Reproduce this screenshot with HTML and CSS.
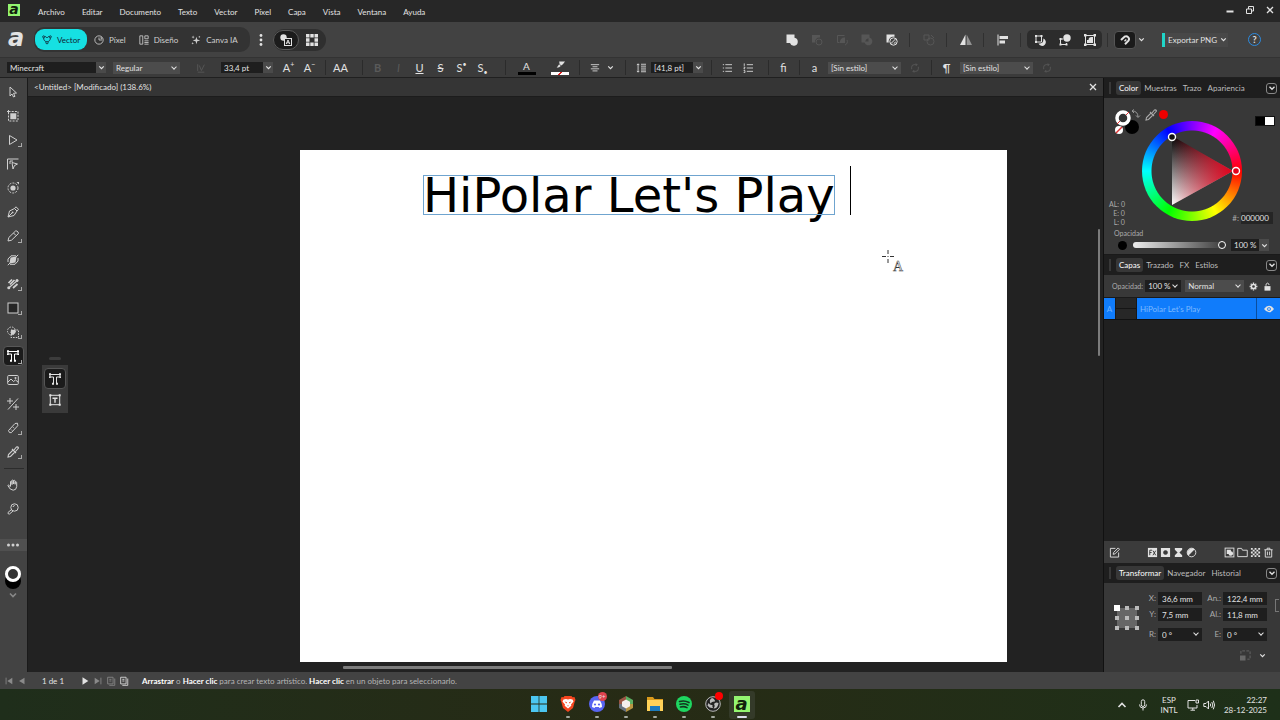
FILE: index.html
```html
<!DOCTYPE html>
<html lang="es">
<head>
  <meta charset="UTF-8" />
  <meta name="viewport" content="width=device-width, initial-scale=1.0" />
  <title>Untitled</title>
  <link rel="stylesheet" href="styles.css">
</head>
<body>

  <!-- Iconos, todos en una rejilla de 12 -->
  <svg class="sprite" aria-hidden="true">
    <symbol id="i-vector" viewBox="0 0 12 12"><path d="M2 3.500c0 3 1.500 4 3 4.500M10 3.500c0 3-1.500 4-3 4.500M3.500 2h1l1.500 1.500L7.500 2h1"/><circle cx="2" cy="2.200" r="1.200"/><circle cx="10" cy="2.200" r="1.200"/><circle cx="6" cy="9.200" r="1.400"/></symbol>
    <symbol id="i-pixel" viewBox="0 0 12 12"><circle cx="6" cy="6" r="5"/><path d="M6 3v3h3.500M8.500 2v2.500H10"/></symbol>
    <symbol id="i-layout" viewBox="0 0 12 12"><path d="M1 1h3.500v10H1zM7 1h4v3.500H7zM6.500 7h5M6.500 9h5M6.500 11h5"/></symbol>
    <symbol id="i-spark" viewBox="0 0 12 12"><path class="f" d="M6.500 2l1 3.500 3.500 1-3.500 1-1 3.500-1-3.500-3.500-1 3.500-1zM2.500.5l.5 1.500 1.500.5-1.500.5-.5 1.500-.5-1.500L.5 2.500 2 2zM2 8.500l.4 1.100 1.100.4-1.100.4L2 11.500l-.4-1.100L.5 10l1.100-.4zM10 1l.4.900.9.400-.9.400L10 3.500l-.4-.8-.9-.4.900-.4z"/></symbol>
    <symbol id="i-dots-v" viewBox="0 0 12 12"><circle class="f" cx="6" cy="1.500" r="1.400"/><circle class="f" cx="6" cy="6" r="1.400"/><circle class="f" cx="6" cy="10.500" r="1.400"/></symbol>
    <symbol id="i-dots-h" viewBox="0 0 12 12"><circle class="f" cx="1.500" cy="6" r="1.500"/><circle class="f" cx="6" cy="6" r="1.500"/><circle class="f" cx="10.500" cy="6" r="1.500"/></symbol>
    <symbol id="i-charshape" viewBox="0 0 12 12"><circle class="f" cx="3.500" cy="3.500" r="3.200"/><rect x="4.500" y="4.500" width="7" height="7" fill="#1c1c1c"/><path d="M6.200 10l1.800-4 1.800 4M6.800 8.800h2.400"/></symbol>
    <symbol id="i-grid" viewBox="0 0 12 12"><path class="f" d="M0 0h3.500v3.500H0zM4.300 0h3.400v3.500H4.300zM8.500 0H12v3.500H8.500zM0 4.300h3.500v3.400H0zM8.500 4.300H12v3.400H8.500zM0 8.500h3.500V12H0zM4.300 8.500h3.400V12H4.300zM8.500 8.500H12V12H8.500z"/></symbol>
    <symbol id="i-union" viewBox="0 0 12 12"><path class="f" d="M.5.5h8v3.300A4 4 0 1 1 4 9H.500z"/></symbol>
    <symbol id="i-subtract" viewBox="0 0 12 12"><path class="f" d="M1 1h8v2.500A4.500 4.500 0 0 0 4 8.500H1z"/><circle cx="8" cy="8" r="3"/></symbol>
    <symbol id="i-intersect" viewBox="0 0 12 12"><path d="M8.500 1.500h-7v7h2"/><path class="f" d="M9 3.500V9H4A4.500 4.500 0 0 1 9 3.500z"/><path d="M9 11a3.500 3.500 0 0 0 2-5"/></symbol>
    <symbol id="i-xor" viewBox="0 0 12 12"><path class="f" fill-rule="evenodd" d="M.5.500h8v3A4 4 0 1 1 3.500 8.500h-3zM4.200 7.500h3.300V4.200A4 4 0 0 0 4.200 7.500z"/></symbol>
    <symbol id="i-combine" viewBox="0 0 12 12"><path class="f" d="M.5.500h8v2.300A4.700 4.700 0 0 0 2.800 8.500H.500z"/><circle cx="7.500" cy="7.500" r="3.700"/><path class="f" d="M9.500 4.500v5h-5a4 4 0 0 0 5-5z"/><path d="M5 9.500L9.500 5"/></symbol>
    <symbol id="i-divide" viewBox="0 0 12 12"><path d="M1 1h5v5H1z"/><circle cx="7.500" cy="7.500" r="3.500"/><path d="M8 1l3 3"/></symbol>
    <symbol id="i-flip" viewBox="0 0 12 12"><path class="f" d="M5.500.5V11H0z"/><path class="f" opacity=".5" d="M6.700.5V11H12z"/></symbol>
    <symbol id="i-alignleft" viewBox="0 0 12 12"><path d="M1 .5v11"/><path class="f" d="M2.500 2H11v3H2.500zM2.500 6.500H8v3H2.500z"/></symbol>
    <symbol id="i-op1" viewBox="0 0 12 12"><path d="M2 2h5.500v6H2z"/><path class="f" d="M1 1h2v2H1zM6.500 1h2v2h-2zM1 7h2v2H1z"/><path class="f" d="M9.300 4.500a3.800 3.800 0 1 1-4.800 5H6q3.300-.5 3.300-3.500z"/></symbol>
    <symbol id="i-op2" viewBox="0 0 12 12"><circle class="f" cx="8" cy="4" r="3.700"/><path d="M4 5H1.500v5.500h6V9"/><path class="f" d="M.5 4h2v2h-2zM.5 9.500h2v2h-2zM6.500 9.500h2v2h-2z"/></symbol>
    <symbol id="i-op3" viewBox="0 0 12 12"><path d="M1.500 1.500h9v9h-9z"/><path class="f" d="M0 0h2.500v2.500H0zM9.500 0H12v2.500H9.500zM0 9.500h2.500V12H0zM9.500 9.500H12V12H9.500zM3 9V6h1.500a3 3 0 0 1 3-3H9v6z"/></symbol>
    <symbol id="i-magnet" viewBox="0 0 12 12"><path stroke-width="2" d="M2 6l3.500-3.300a2.900 2.900 0 0 1 4 4L6 10.200"/><path d="M5.500 7.300l1.800-1.800" stroke-width="1.500"/></symbol>
    <symbol id="i-chev" viewBox="0 0 12 12"><path d="M3 4.500l3 3 3-3" stroke-width="1.600"/></symbol>
    <symbol id="i-up" viewBox="0 0 12 12"><path d="M2.500 8L6 4.500 9.500 8" stroke-width="1.600"/></symbol>
    <symbol id="i-min" viewBox="0 0 12 12"><path d="M2.500 7.500h7" stroke-width="2"/></symbol>
    <symbol id="i-restore" viewBox="0 0 12 12"><path d="M2.500 5h5v4.500h-5zM4.500 5V2.500h5V7H7.500"/></symbol>
    <symbol id="i-close" viewBox="0 0 12 12"><path d="M3 3l6 6M9 3L3 9" stroke-width="1.300"/></symbol>
    <symbol id="i-center" viewBox="0 0 12 12"><path d="M1 2h10M3 4.500h6M1 7h10M3 9.500h6"/></symbol>
    <symbol id="i-leading" viewBox="0 0 12 12"><path d="M2.500 1v10M1 2.500L2.500 1 4 2.500M1 9.500L2.500 11 4 9.500M6 1.500h6M6 3.800h6M6 6.100h6M6 8.400h6M6 10.500h6"/></symbol>
    <symbol id="i-bullets" viewBox="0 0 12 12"><path d="M4 2h8M4 6h8M4 10h8M1 2h1.500M1 6h1.500M1 10h1.500"/></symbol>
    <symbol id="i-numbers" viewBox="0 0 12 12"><path d="M4.500 2H12M4.500 6H12M4.500 10H12M1.500.5v3M.8 5H2.500L1 7h1.500M.8 9h1.500v2.500H.8"/></symbol>
    <symbol id="i-refresh" viewBox="0 0 12 12"><path d="M2 7.500V5a3 3 0 0 1 3-3h3.500M7 .5L8.500 2 7 3.500M10 4.500V7a3 3 0 0 1-3 3H3.500M5 8.500L3.500 10 5 11.500"/></symbol>
    <symbol id="i-kern" viewBox="0 0 12 12"><path d="M2 1.500v8M4 3l2.500 6L10 2M2 11h8"/></symbol>
    <symbol id="i-marker" viewBox="0 0 12 12"><path class="f" d="M5 .5h7L9.500 4 7.500 5.500 5.500 3.500zM5 4l2 2-2 1.500L2 8z"/></symbol>

    <symbol id="i-move" viewBox="0 0 12 12"><path d="M3 1l6.500 6-3 .3 1.500 3-1.500.7L5 8 3 10z"/></symbol>
    <symbol id="i-artboard" viewBox="0 0 12 12"><path d="M1.500 1.500h9.500v9.500H1.500z" stroke-dasharray="2 1.200"/><path class="f" d="M3.300 3.300h6v6h-6zM0 1h3v1H0zM1 0h1v3H1z"/></symbol>
    <symbol id="i-node" viewBox="0 0 12 12"><path d="M2.500 1.500L10 6 2.500 10.500z"/></symbol>
    <symbol id="i-corner" viewBox="0 0 12 12"><path d="M.5 11.500V1h11M3 3h3M3 3v3"/><path d="M5 4.500l5.500 1.500-3 1.500L6 11z"/></symbol>
    <symbol id="i-contour" viewBox="0 0 12 12"><circle cx="6" cy="6" r="5" stroke-dasharray="2 1.200"/><circle class="f" cx="6" cy="6" r="2.600"/><path class="f" d="M9.500 0H12v2.500z"/></symbol>
    <symbol id="i-pen" viewBox="0 0 12 12"><path d="M1 11L2.500 5 7.500 2.500 10 5 7 9.500zM7.500 2.500L9 .8 11.500 3.300 10 5M1 11l4-4"/><circle class="f" cx="5.600" cy="6.400" r=".9"/></symbol>
    <symbol id="i-pencil" viewBox="0 0 12 12"><path d="M1 11l.8-3.500L8.500 1q1.500-.5 2.500 1t0 2L4.500 10.200zM6.500 3l2.500 2.500"/></symbol>
    <symbol id="i-fillb" viewBox="0 0 12 12"><path class="f" d="M3.500 3.500L9.500 2.500 8.500 8.500 2.500 9.500z"/><path d="M.8 11.200L11.200.8M1 8V5l3-3.200h5M3 10.300h5L11 7V4"/></symbol>
    <symbol id="i-gradient" viewBox="0 0 12 12"><path d="M1 10.500L11 2" stroke-width="1.200"/><path d="M1.500 5l3.500-3.500M3 6.500l4.500-4.500M6 10l4.500-4" stroke-width="1.700"/><circle class="f" cx="1.800" cy="9.800" r="1.500"/><circle class="f" cx="10" cy="2.500" r="1.500"/></symbol>
    <symbol id="i-rect" viewBox="0 0 12 12"><rect x="1" y="1" width="10" height="10" fill="#262626"/></symbol>
    <symbol id="i-builder" viewBox="0 0 12 12"><circle cx="4.500" cy="5" r="4" stroke-dasharray="1.500 1.200"/><path d="M4 4h7.500v7.500H4z" stroke-dasharray="1.500 1.200"/><path class="f" d="M4 4h4.500v2A4.500 4.500 0 0 1 4 9z"/></symbol>
    <symbol id="i-type" viewBox="0 0 12 12"><path d="M1.500 1.500h9M1.500 4L4.500 4V10.500M10.500 4L7.500 4V10.500M1 1.500v2.500M11 1.500v2.500"/><path class="f" d="M0 .3h2v2H0zM10 .3h2v2h-2zM3 9.700h2v2H3zM7 9.700h2v2H7zM0 3.500h1.800v1.600H0zM10.200 3.500H12v1.600h-1.800z"/></symbol>
    <symbol id="i-frame" viewBox="0 0 12 12"><path d="M1.300 1.300h9.400v9.400H1.300z"/><path d="M3.500 4.200h5M6 4.200v4.600" stroke-width="1.400"/><path class="f" d="M.3.300h2v2h-2zM9.700.300h2v2h-2zM.3 9.700h2v2h-2zM9.700 9.700h2v2h-2z"/></symbol>
    <symbol id="i-image" viewBox="0 0 12 12"><rect x=".7" y="1.500" width="10.600" height="9" rx="1"/><path d="M1 8l3-3 2.500 2.500L8.500 6 11 8"/><circle class="f" cx="8.500" cy="4" r="1"/></symbol>
    <symbol id="i-crop" viewBox="0 0 12 12"><path d="M0 3h6M3 0v6M11 .5L1 11.500M6 9h6M9 6v6"/></symbol>
    <symbol id="i-knife" viewBox="0 0 12 12"><path d="M1.500 8.500l6.500-7 2.500-.3.300 2.500-6.500 7Q2 11.500 1.500 8.500zM4 7.500l1 1M6 5.200l1 1"/></symbol>
    <symbol id="i-dropper" viewBox="0 0 12 12"><path d="M1 11l.5-2.500L6 4l2 2-4.500 4.500zM5 3l4 4M7 4l2.500-3q1.500-.5 2 1L8.500 5.500" stroke-width="1.100"/></symbol>
    <symbol id="i-hand" viewBox="0 0 12 12"><path d="M3.500 7V2.500q.8-1 1.500 0V6M5 5V1.500q.8-1 1.500 0V5M6.500 5V1.800q.8-1 1.600 0V5.500M8.100 5V3q1-.8 1.600.3V7.500q-.3 3.700-3.500 3.700Q3 11.200.8 6.500q.7-1 1.700.2l1 1.300"/></symbol>
    <symbol id="i-zoom" viewBox="0 0 12 12"><circle cx="7.500" cy="4.500" r="3.700"/><path d="M4.500 6.500L1 9.500q-.5 1.700 1.500 1.500L6 8M6 4q.3-1.400 1.700-1.500"/></symbol>

    <symbol id="i-edit" viewBox="0 0 12 12"><path d="M7 1.500H1.500v9.500h9V6M4.500 8l.5-2L10 1l1.500 1.500-5 5z"/></symbol>
    <symbol id="i-fx" viewBox="0 0 12 12"><rect class="f" x="1" y="1" width="10" height="10"/><path stroke="#333" d="M3 9V3.500h2.500M3 6h2M6.500 4l3 5M9.500 4l-3 5"/></symbol>
    <symbol id="i-mask" viewBox="0 0 12 12"><path class="f" fill-rule="evenodd" d="M1 1h10v10H1zM6 3.500a2.500 2.500 0 1 0 .01 0z"/></symbol>
    <symbol id="i-hourglass" viewBox="0 0 12 12"><path class="f" d="M2 1h8v2L7 6l3 3v2H2V9l3-3-3-3z"/></symbol>
    <symbol id="i-adjust" viewBox="0 0 12 12"><circle cx="6" cy="6" r="4.700"/><path class="f" d="M9.500 2.500a5 5 0 0 0-7 7z"/></symbol>
    <symbol id="i-layeradd" viewBox="0 0 12 12"><rect x="1.200" y="1.200" width="9.600" height="9.600"/><path class="f" d="M3 3h4.500v1.500A2.500 2.500 0 1 1 5 7.500H3z"/></symbol>
    <symbol id="i-folder" viewBox="0 0 12 12"><path d="M.8 10.500v-9H5L6 3.500h5.200v7z"/></symbol>
    <symbol id="i-checker" viewBox="0 0 12 12"><path class="f" d="M1 1h2v2H1zM5 1h2v2H5zM9 1h2v2H9zM3 3h2v2H3zM7 3h2v2H7zM1 5h2v2H1zM5 5h2v2H5zM9 5h2v2H9zM3 7h2v2H3zM7 7h2v2H7zM1 9h2v2H1zM5 9h2v2H5zM9 9h2v2H9z"/></symbol>
    <symbol id="i-trash" viewBox="0 0 12 12"><path d="M1.500 3h9M4.500 3V1.300h3V3M2.500 3v8h7V3M4.800 5v4M7.200 5v4"/></symbol>
    <symbol id="i-gear" viewBox="0 0 12 12"><circle cx="6" cy="6" r="2.800" stroke-width="2"/><path stroke-width="1.800" d="M6 .8v1.700M6 9.500v1.700M.8 6h1.700M9.500 6h1.700M2.300 2.300l1.200 1.200M8.500 8.500l1.200 1.200M2.300 9.700l1.200-1.200M8.500 3.500l1.200-1.200"/></symbol>
    <symbol id="i-lock" viewBox="0 0 12 12"><rect class="f" x="2" y="5.500" width="8" height="6"/><path d="M4 5V3q2-3 4 0v1" stroke-width="1.300"/></symbol>
    <symbol id="i-eye" viewBox="0 0 12 12"><path class="f" fill-rule="evenodd" d="M0 6q6-8 12 0-6 8-12 0zM6 3.800a2.200 2.200 0 1 0 .01 0z"/><circle class="f" cx="6" cy="6" r="1.100"/></symbol>
    <symbol id="i-anchor" viewBox="0 0 12 12"><path d="M1 4V1h10v9H8" stroke-dasharray="3 1.500"/><rect class="f" x="0" y="6" width="6" height="5.500"/></symbol>

    <symbol id="i-first" viewBox="0 0 12 12"><path d="M2.500 2v8"/><path class="f" d="M10 2v8L4 6z"/></symbol>
    <symbol id="i-prev" viewBox="0 0 12 12"><path class="f" d="M9 2v8L2.500 6z"/></symbol>
    <symbol id="i-next" viewBox="0 0 12 12"><path class="f" d="M3 1.500v9L10 6z"/></symbol>
    <symbol id="i-last" viewBox="0 0 12 12"><path d="M9.500 2v8"/><path class="f" d="M2 2v8l6-4z"/></symbol>
    <symbol id="i-page" viewBox="0 0 12 12"><path d="M2 1.500h6.500v8H2zM4 11.200h6.500V3M4 4h2.500M4 6h2.500"/></symbol>
    <symbol id="i-mic" viewBox="0 0 12 12"><rect x="4.300" y=".8" width="3.400" height="6.700" rx="1.700"/><path d="M2.500 5.500a3.500 3.500 0 0 0 7 0M6 9v2.500"/></symbol>
    <symbol id="i-net" viewBox="0 0 12 12"><path d="M8 1.500H1v7.500h9V6M3.500 11.200h4.500M5.800 9v2M9 1h2.500v3H9z"/></symbol>
    <symbol id="i-sound" viewBox="0 0 12 12"><path d="M.8 4.500H3L5.500 2v8L3 7.500H.8zM7.200 4.500q1 1.500 0 3M8.800 3q2 3 0 6M10.300 1.700q2.600 4.300 0 8.600"/></symbol>
  </svg>

  <div class="app">

    <header class="titlebar">
      <span class="brand">a</span>
      <nav class="menu">
        <a href="#">Archivo</a>
        <a href="#">Editar</a>
        <a href="#">Documento</a>
        <a href="#">Texto</a>
        <a href="#">Vector</a>
        <a href="#">Píxel</a>
        <a href="#">Capa</a>
        <a href="#">Vista</a>
        <a href="#">Ventana</a>
        <a href="#">Ayuda</a>
      </nav>
      <div class="window-buttons">
        <button aria-label="Minimizar"><svg><use href="#i-min"/></svg></button>
        <button aria-label="Restaurar"><svg><use href="#i-restore"/></svg></button>
        <button aria-label="Cerrar"><svg><use href="#i-close"/></svg></button>
      </div>
    </header>

    <div class="toolbar">
      <span class="logo">a</span>
      <div class="studios">
        <button class="studio active"><svg><use href="#i-vector"/></svg>Vector</button>
        <button class="studio"><svg><use href="#i-pixel"/></svg>Píxel</button>
        <button class="studio"><svg><use href="#i-layout"/></svg>Diseño</button>
        <button class="studio"><svg><use href="#i-spark"/></svg>Canva IA</button>
      </div>
      <button class="more" aria-label="Más"><svg><use href="#i-dots-v"/></svg></button>
      <div class="views">
        <button class="view active" aria-label="Vista de objetos"><svg><use href="#i-charshape"/></svg></button>
        <button class="view" aria-label="Vista de cuadrícula"><svg><use href="#i-grid"/></svg></button>
      </div>

      <div class="toolbar-right">
        <button class="tb" aria-label="Sumar"><svg><use href="#i-union"/></svg></button>
        <button class="tb" disabled aria-label="Restar"><svg><use href="#i-subtract"/></svg></button>
        <button class="tb" disabled aria-label="Intersecar"><svg><use href="#i-intersect"/></svg></button>
        <button class="tb" disabled aria-label="Excluir"><svg><use href="#i-xor"/></svg></button>
        <button class="tb" aria-label="Combinar"><svg><use href="#i-combine"/></svg></button>
        <i class="sep"></i>
        <button class="tb" disabled aria-label="Dividir"><svg><use href="#i-divide"/></svg></button>
        <i class="sep"></i>
        <button class="tb" aria-label="Voltear"><svg><use href="#i-flip"/></svg></button>
        <i class="sep"></i>
        <button class="tb" aria-label="Alinear"><svg><use href="#i-alignleft"/></svg></button>
        <i class="sep"></i>
        <div class="tb-group">
          <button class="tb" aria-label="Insertar detrás"><svg><use href="#i-op1"/></svg></button>
          <button class="tb" aria-label="Insertar encima"><svg><use href="#i-op2"/></svg></button>
          <button class="tb" aria-label="Insertar dentro"><svg><use href="#i-op3"/></svg></button>
        </div>
        <i class="sep"></i>
        <button class="magnet" aria-label="Ajuste"><svg><use href="#i-magnet"/></svg></button>
        <button class="arrow" aria-label="Opciones de ajuste"><svg><use href="#i-chev"/></svg></button>
        <button class="export">Exportar PNG<svg><use href="#i-chev"/></svg></button>
        <button class="help" aria-label="Ayuda">?</button>
      </div>
    </div>

    <div class="context">
      <div class="combo font-name">
        <input type="text" value="Minecraft" aria-label="Fuente">
        <button aria-label="Lista de fuentes"><svg><use href="#i-chev"/></svg></button>
      </div>
      <div class="select font-style">
        <select aria-label="Estilo de fuente"><option>Regular</option></select>
      </div>
      <button class="ctx kern" disabled aria-label="Fuente variable"><svg><use href="#i-kern"/></svg></button>
      <div class="combo size">
        <input type="text" value="33,4 pt" aria-label="Tamaño">
        <button aria-label="Tamaños"><svg><use href="#i-chev"/></svg></button>
      </div>
      <div class="group g-size">
        <button class="ctx letter">A<sup>+</sup></button>
        <button class="ctx letter">A<sup>−</sup></button>
      </div>
      <div class="group g-caps"><button class="ctx letter">AA</button></div>
      <div class="group g-letters">
        <button class="ctx letter" disabled><b>B</b></button>
        <button class="ctx letter" disabled><i>I</i></button>
        <button class="ctx letter"><u>U</u></button>
        <button class="ctx letter"><s>S</s></button>
        <button class="ctx letter">S<sup>•</sup></button>
        <button class="ctx letter">S<sub>•</sub></button>
      </div>
      <div class="group g-color">
        <button class="ctx swatch"><span>A</span><i class="bar black"></i></button>
        <button class="ctx swatch" aria-label="Resaltado"><svg><use href="#i-marker"/></svg><i class="bar none"></i></button>
      </div>
      <div class="group g-align">
        <button class="ctx" aria-label="Alinear al centro"><svg><use href="#i-center"/></svg></button>
        <button class="arrow" aria-label="Más alineaciones"><svg><use href="#i-chev"/></svg></button>
      </div>
      <div class="group g-leading">
        <span class="ctx"><svg><use href="#i-leading"/></svg></span>
        <div class="combo size">
          <input type="text" value="[41,8 pt]" aria-label="Interlineado">
          <button aria-label="Interlineados"><svg><use href="#i-chev"/></svg></button>
        </div>
      </div>
      <div class="group g-lists">
        <button class="ctx" aria-label="Viñetas"><svg><use href="#i-bullets"/></svg></button>
        <button class="ctx" aria-label="Numeración"><svg><use href="#i-numbers"/></svg></button>
      </div>
      <div class="group g-lig"><button class="ctx letter">fi</button></div>
      <div class="group g-style">
        <label class="ctx letter" for="char-style">a</label>
        <div class="select text-style"><select id="char-style"><option>[Sin estilo]</option></select></div>
        <button class="ctx" disabled aria-label="Actualizar estilo de carácter"><svg><use href="#i-refresh"/></svg></button>
      </div>
      <div class="group g-style">
        <label class="ctx letter" for="par-style">¶</label>
        <div class="select text-style"><select id="par-style"><option>[Sin estilo]</option></select></div>
        <button class="ctx" disabled aria-label="Actualizar estilo de párrafo"><svg><use href="#i-refresh"/></svg></button>
      </div>
    </div>

    <div class="workspace">

      <aside class="tools">
        <button aria-label="Mover"><svg><use href="#i-move"/></svg></button>
        <button aria-label="Mesa de trabajo"><svg><use href="#i-artboard"/></svg></button>
        <button class="has-more" aria-label="Nodo"><svg><use href="#i-node"/></svg></button>
        <button aria-label="Esquina"><svg><use href="#i-corner"/></svg></button>
        <button aria-label="Contorno"><svg><use href="#i-contour"/></svg></button>
        <button aria-label="Pluma"><svg><use href="#i-pen"/></svg></button>
        <button class="has-more" aria-label="Lápiz"><svg><use href="#i-pencil"/></svg></button>
        <button aria-label="Relleno"><svg><use href="#i-fillb"/></svg></button>
        <button class="has-more" aria-label="Degradado"><svg><use href="#i-gradient"/></svg></button>
        <button class="has-more" aria-label="Rectángulo"><svg><use href="#i-rect"/></svg></button>
        <button class="has-more" aria-label="Generador de formas"><svg><use href="#i-builder"/></svg></button>
        <button class="has-more active" aria-label="Texto artístico"><svg><use href="#i-type"/></svg></button>
        <button aria-label="Imagen"><svg><use href="#i-image"/></svg></button>
        <button aria-label="Recorte"><svg><use href="#i-crop"/></svg></button>
        <button class="has-more" aria-label="Cuchillo"><svg><use href="#i-knife"/></svg></button>
        <button class="has-more" aria-label="Cuentagotas"><svg><use href="#i-dropper"/></svg></button>
        <hr>
        <button aria-label="Mano"><svg><use href="#i-hand"/></svg></button>
        <button aria-label="Zoom"><svg><use href="#i-zoom"/></svg></button>
        <button class="tools-more" aria-label="Más herramientas"><svg><use href="#i-dots-h"/></svg></button>
        <div class="wells"><i class="well-fill"></i><i class="well-stroke"></i></div>
        <button class="swap" aria-label="Intercambiar"><svg><use href="#i-chev"/></svg></button>
      </aside>

      <main class="document">
        <div class="doc-tab">
          <span>&lt;Untitled&gt; [Modificado] (138.6%)</span>
          <button aria-label="Cerrar documento"><svg><use href="#i-close"/></svg></button>
        </div>
        <div class="canvas">
          <div class="artboard">
            <h1 class="art-text">HiPolar Let's Play</h1>
            <i class="caret"></i>
            <svg class="cursor" viewBox="0 0 22 22"><path d="M0 6.500h4M8 6.500h4M6 0v4M6 9v4M6 6v1"/><text x="11" y="21">A</text></svg>
          </div>
          <div class="flyout">
            <button class="active" aria-label="Texto artístico"><svg><use href="#i-type"/></svg></button>
            <button aria-label="Marco de texto"><svg><use href="#i-frame"/></svg></button>
          </div>
          <i class="scroll-v"></i>
          <i class="scroll-h"></i>
        </div>
      </main>

      <aside class="panels">
        <div class="tabs">
          <button class="tab active">Color</button>
          <button class="tab">Muestras</button>
          <button class="tab">Trazo</button>
          <button class="tab">Apariencia</button>
          <button class="panel-menu" aria-label="Opciones"><svg><use href="#i-chev"/></svg></button>
        </div>
        <section class="color-panel">
          <div class="picker">
            <svg class="wheel-tri" viewBox="0 0 100 100">
              <defs>
                <linearGradient id="bw" x1="0" y1="0" x2="0" y2="1"><stop offset="0" stop-color="#000"/><stop offset="1" stop-color="#fff"/></linearGradient>
                <linearGradient id="red"><stop offset="0" stop-color="#e3001b" stop-opacity="0"/><stop offset="1" stop-color="#e3001b"/></linearGradient>
              </defs>
              <path d="M30 15L91 50 30 84z" fill="url(#bw)"/>
              <path d="M30 15L91 50 30 84z" fill="url(#red)"/>
              <circle cx="30" cy="16" r="3.500" fill="#111" stroke="#fff" stroke-width="1.400"/>
              <circle cx="94" cy="50" r="3.500" fill="#e3001b" stroke="#fff" stroke-width="1.400"/>
            </svg>
            <div class="picker-top">
              <svg class="color-wells" viewBox="0 0 28 28">
                <circle cx="18" cy="18" r="7" fill="#000"/>
                <circle cx="9" cy="9" r="6" fill="#333" stroke="#fff" stroke-width="3.500"/>
                <path d="M3 15L6 12M12 6l3-3" stroke="#d33" stroke-width="1"/>
                <circle cx="5" cy="21" r="4" fill="#fff"/><path d="M2 24l6-6" stroke="#d33" stroke-width="1.500"/>
                <path d="M18 2q6 0 6 6M20 .5L18 2l2 2M22 6.500L24 8.500l2-2" fill="none" stroke="#999"/>
              </svg>
              <button class="pick" aria-label="Selector de color"><svg><use href="#i-dropper"/></svg></button>
              <i class="dot red"></i>
              <span class="bw"><i></i><i></i></span>
            </div>
            <div class="picker-bottom">
              <p class="hsl">AL: 0<br>E: 0<br>L: 0</p>
              <label class="hex">#: <input type="text" value="000000"></label>
            </div>
          </div>
          <label class="opacity-label" for="opacity">Opacidad</label>
          <div class="opacity-row">
            <i class="dot black"></i>
            <input type="range" id="opacity" value="100">
            <input type="text" value="100 %" aria-label="Opacidad">
            <button aria-label="Valores"><svg><use href="#i-chev"/></svg></button>
          </div>
        </section>

        <div class="tabs">
          <button class="tab active">Capas</button>
          <button class="tab">Trazado</button>
          <button class="tab">FX</button>
          <button class="tab">Estilos</button>
          <button class="panel-menu" aria-label="Opciones"><svg><use href="#i-chev"/></svg></button>
        </div>
        <div class="layer-options">
          <label for="layer-opacity">Opacidad:</label>
          <div class="select dark"><select id="layer-opacity"><option>100 %</option></select></div>
          <div class="select blend"><select aria-label="Modo de fusión"><option>Normal</option></select></div>
          <button aria-label="Ajustes"><svg><use href="#i-gear"/></svg></button>
          <button aria-label="Bloquear"><svg><use href="#i-lock"/></svg></button>
        </div>
        <div class="layers">
          <div class="layer">
            <span class="kind">A</span>
            <span class="thumb"></span>
            <span class="name">HiPolar Let's Play</span>
            <button aria-label="Visible"><svg><use href="#i-eye"/></svg></button>
          </div>
        </div>
        <div class="layer-actions">
          <button aria-label="Editar"><svg><use href="#i-edit"/></svg></button>
          <div>
            <button aria-label="Efectos"><svg><use href="#i-fx"/></svg></button>
            <button aria-label="Máscara"><svg><use href="#i-mask"/></svg></button>
            <button aria-label="Filtro"><svg><use href="#i-hourglass"/></svg></button>
            <button aria-label="Ajuste"><svg><use href="#i-adjust"/></svg></button>
          </div>
          <div>
            <button aria-label="Nueva capa"><svg><use href="#i-layeradd"/></svg></button>
            <button aria-label="Grupo"><svg><use href="#i-folder"/></svg></button>
            <button aria-label="Capa de píxeles"><svg><use href="#i-checker"/></svg></button>
            <button aria-label="Eliminar"><svg><use href="#i-trash"/></svg></button>
          </div>
        </div>

        <div class="tabs">
          <button class="tab active">Transformar</button>
          <button class="tab">Navegador</button>
          <button class="tab">Historial</button>
          <button class="panel-menu" aria-label="Opciones"><svg><use href="#i-chev"/></svg></button>
        </div>
        <section class="transform">
          <svg class="anchors" viewBox="0 0 26 26">
            <rect x="3" y="3" width="20" height="20" fill="#666"/>
            <path fill="#bbb" d="M11 1h4v4h-4zM21 1h4v4h-4zM1 11h4v4H1zM11 11h4v4h-4zM21 11h4v4h-4zM1 21h4v4H1zM11 21h4v4h-4zM21 21h4v4h-4z"/>
            <path fill="#fff" d="M0 0h6v6H0z"/>
          </svg>
          <div class="fields">
            <label for="tx">X:</label><input id="tx" type="text" value="36,6 mm">
            <label for="tw">An.:</label><input id="tw" type="text" value="122,4 mm">
            <label for="ty">Y:</label><input id="ty" type="text" value="7,5 mm">
            <label for="th">Al.:</label><input id="th" type="text" value="11,8 mm">
            <label class="last" for="tr">R:</label><div class="select dark last"><select id="tr"><option>0 °</option></select></div>
            <label class="last" for="te">E:</label><div class="select dark last"><select id="te"><option>0 °</option></select></div>
          </div>
          <i class="link"></i>
          <div class="transform-foot">
            <svg><use href="#i-anchor"/></svg>
            <button class="arrow" aria-label="Más opciones"><svg><use href="#i-chev"/></svg></button>
          </div>
        </section>
      </aside>
    </div>

    <div class="status">
      <button disabled aria-label="Primera página"><svg><use href="#i-first"/></svg></button>
      <button disabled aria-label="Anterior"><svg><use href="#i-prev"/></svg></button>
      <span class="page">1 de 1</span>
      <button aria-label="Siguiente"><svg><use href="#i-next"/></svg></button>
      <button disabled aria-label="Última página"><svg><use href="#i-last"/></svg></button>
      <button disabled aria-label="Página"><svg><use href="#i-page"/></svg></button>
      <button aria-label="Pliego"><svg><use href="#i-page"/></svg></button>
      <p><b>Arrastrar</b> o <b>Hacer clic</b> para crear texto artístico. <b>Hacer clic</b> en un objeto para seleccionarlo.</p>
    </div>

    <footer class="taskbar">
      <div class="apps">
        <button aria-label="Inicio"><svg viewBox="0 0 16 16"><path fill="#4cc6f0" d="M0 0h7.600v7.600H0zM8.400 0H16v7.600H8.400zM0 8.400h7.600V16H0zM8.400 8.400H16V16H8.400z"/></svg></button>
        <button class="open" aria-label="Brave"><svg viewBox="0 0 16 16"><path fill="#f4451f" d="M4.500 0h7l1 1.300 2-.2L15.500 4l-.7 1.500L13 12l-5 4-5-4L1.200 5.500.500 4l1-2.900 2 .2z"/><path fill="#fff" d="M3.500 3.500L6 3l2 .6L10 3l2.500.5 1 2-2.500 3 .3 1.300L8 12.500 4.700 9.800 5 8.500l-2.500-3z"/><path fill="#f4451f" d="M4.500 5.500l2.500.7-.5 1.300zM11.500 5.500L9 6.200l.5 1.300zM7 9.500h2l-1 1z"/></svg></button>
        <button class="open" aria-label="Discord"><svg viewBox="0 0 16 16"><circle cx="8" cy="8" r="8" fill="#5865f2"/><path fill="#fff" d="M5 4.500h6q2 3 2 6.500l-2.500 1-.7-1H6.200l-.7 1L3 11q0-3.500 2-6.500z"/><circle cx="6" cy="8.500" r="1.100" fill="#5865f2"/><circle cx="10" cy="8.500" r="1.100" fill="#5865f2"/></svg><span class="badge">9+</span></button>
        <button class="open" aria-label="Lanzador"><svg viewBox="0 0 16 16"><path fill="#9a5444" d="M8 0L1 4v4l7 0z"/><path fill="#5cae62" d="M8 0l7 4v4H8z"/><path fill="#66707e" d="M1 8v4l7 4V8z"/><path fill="#b99542" d="M15 8v4l-7 4V8z"/><path fill="#f4eeee" d="M8 3.500l4 2.300v4.400l-4 2.300-4-2.300V5.800z"/></svg></button>
        <button class="open" aria-label="Explorador"><svg viewBox="0 0 16 16"><path fill="#d99a1c" d="M0 1h6l1.500 2H16v4H0z"/><path fill="#ffd258" d="M0 4h16v11H0z"/><path fill="#1c7bbd" d="M3 10h10v5H3z"/></svg></button>
        <button class="open" aria-label="Spotify"><svg viewBox="0 0 16 16"><circle cx="8" cy="8" r="8" fill="#1ed760"/><path fill="none" stroke="#14351f" stroke-width="1.600" stroke-linecap="round" d="M3.500 5.500q5-1.500 9.500 1M4 8.300q4.500-1.300 8 .8M4.500 11q3.500-1 6.500.6"/></svg></button>
        <button class="open" aria-label="OBS"><svg viewBox="0 0 16 16"><circle cx="8" cy="8" r="7.300" fill="#222" stroke="#bbb"/><path fill="#bbb" d="M7 2q-3.500 2-1.500 5.500Q7 5 10 5.500 10 3 7 2zM13.500 7q-3-1.500-4.500 1 1.500 2-.5 4.500 4.500 0 5-5.500zM2.500 9.500q2 3 5.500 2.500-1-1.500-.5-3-2.500.5-4-2z"/></svg><span class="badge rec"></span></button>
        <button class="open current" aria-label="Affinity"><span class="brand">a</span></button>
      </div>
      <div class="tray">
        <button aria-label="Iconos ocultos"><svg><use href="#i-up"/></svg></button>
        <button aria-label="Micrófono"><svg><use href="#i-mic"/></svg></button>
        <span class="lang">ESP<br>INTL</span>
        <button class="net" aria-label="Red"><svg><use href="#i-net"/></svg><svg><use href="#i-sound"/></svg></button>
        <time class="clock">22:27<br>28-12-2025</time>
      </div>
    </footer>
  </div>
</body>
</html>
```
FILE: styles.css
```css
:root {
  --title: #272727;
  --bar: #424242;
  --context: #3b3b3b;
  --panel: #383838;
  --dark: #222222;
  --field: #1e1e1e;
  --line: #1a1a1a;
  --text: #e2e2e2;
  --muted: #ababab;
  --cyan: #16e0e2;
  --green: #93f570;
}

* {
  box-sizing: border-box;
}

body {
  margin: 0;
  background: var(--dark);
  color: var(--text);
  font-family: Lato, "Open Sans", sans-serif;
  font-size: 8px;
  line-height: 12px;
}

button,
input,
select {
  margin: 0;
  padding: 0;
  border: 0;
  background: none;
  color: inherit;
  font: inherit;
}

button {
  display: flex;
  align-items: center;
  justify-content: center;
}

button:disabled {
  color: #666;
}

p {
  margin: 0;
}

a {
  color: inherit;
  text-decoration: none;
}

svg {
  display: block;
  flex: none;
  width: 12px;
  height: 12px;
}

symbol {
  fill: none;
  stroke: currentColor;
}

symbol .f {
  fill: currentColor;
  stroke: none;
}

.sprite {
  position: absolute;
  width: 0;
  height: 0;
}

.app {
  display: flex;
  flex-direction: column;
  height: 100vh;
  overflow: hidden;
}

/* Barra de título */
.titlebar {
  display: flex;
  align-items: center;
  flex: none;
  height: 22px;
  padding: 0 0 2px 8px;
  background: var(--title);
}

.brand {
  width: 12px;
  height: 12px;
  overflow: hidden;
  background: var(--green);
  color: #10200c;
  font: italic 700 14px/11px "DejaVu Sans", sans-serif;
  text-align: center;
}

.menu {
  display: flex;
  gap: 17px;
  margin: 4px auto 0 18px;
}

.window-buttons {
  display: flex;
}

.window-buttons button {
  width: 20px;
}

/* Barra principal */
.toolbar {
  display: flex;
  align-items: center;
  flex: none;
  height: 35px;
  padding: 0 19px 0 8px;
  background: var(--bar);
}

.logo {
  width: 16px;
  margin-right: 10px;
  padding-bottom: 3px;
  font: italic 700 24px/18px "DejaVu Sans", sans-serif;
  text-align: center;
}

.studios {
  display: flex;
  align-items: center;
  gap: 1px;
  height: 25px;
  padding: 0 6px 0 1px;
  border-radius: 10px;
  background: #333;
}

.studio {
  gap: 5px;
  height: 21px;
  padding: 0 6px;
  border-radius: 9px;
  color: #d0d0d0;
}

.studio svg {
  width: 10px;
  height: 10px;
}

.studio.active {
  width: 52px;
  background: var(--cyan);
  color: #123;
}

.more {
  width: 23px;
}

.views {
  display: flex;
  align-items: center;
  height: 22px;
  padding-right: 1px;
  border-radius: 11px;
  background: #2f2f2f;
}

.view {
  width: 26px;
  height: 20px;
  border-radius: 10px;
}

.view.active {
  border: 1px solid #5a5a5a;
  background: #1c1c1c;
}

.toolbar-right {
  display: flex;
  align-items: center;
  margin-left: auto;
}

.tb {
  width: 25px;
  height: 19px;
}

.tb:disabled {
  color: #565656;
}

.sep {
  width: 1px;
  height: 14px;
  margin: 0 6px 0 5px;
  background: #303030;
}

.tb-group {
  display: flex;
  border-radius: 5px;
  background: #2c2c2c;
}

.magnet {
  width: 22px;
  height: 18px;
  border: 1px solid #555;
  border-radius: 4px;
  background: #1a1a1a;
}

.arrow {
  width: 10px;
}

.arrow svg,
.combo svg,
.export svg {
  width: 9px;
  height: 9px;
}

.export {
  height: 14px;
  margin: 0 20px 0 16px;
  padding-left: 3px;
  gap: 2px;
  border-left: 3px solid #20d5c8;
  background: #484848;
}

.help {
  width: 13px;
  height: 13px;
  border: 1px solid #2c8be0;
  border-radius: 50%;
  font-weight: 700;
  font-size: 9px;
}

/* Barra contextual */
.context {
  display: flex;
  align-items: center;
  flex: none;
  height: 21px;
  padding-left: 7px;
  border-top: 1px solid #333;
  border-bottom: 1px solid #202020;
  background: var(--context);
}

.combo {
  display: flex;
  height: 11px;
  background: var(--field);
}

.combo input {
  flex: 1;
  width: 0;
  padding-left: 3px;
}

.combo button {
  width: 10px;
  background: #4a4a4a;
}

.font-name {
  width: 99px;
}

.size {
  width: 52px;
}

.select {
  position: relative;
  height: 12px;
  background: #4c4c4c;
}

.select select {
  display: block;
  width: 100%;
  height: 100%;
  padding: 0 3px;
  appearance: none;
}

.select::after {
  content: "";
  position: absolute;
  top: 3px;
  right: 4px;
  width: 3px;
  height: 3px;
  border: solid var(--text);
  border-width: 0 1px 1px 0;
  transform: rotate(45deg);
  pointer-events: none;
}

.select.dark {
  background: var(--field);
}

.font-style {
  width: 67px;
  margin-left: 7px;
}

.text-style {
  width: 73px;
  margin: 0 3px;
}

.ctx {
  display: flex;
  align-items: center;
  justify-content: center;
  flex: none;
  width: 21px;
  height: 16px;
}

.ctx svg {
  width: 10px;
  height: 10px;
}

.ctx:disabled {
  color: #5a5a5a;
}

.letter {
  font-size: 11px;
}

.letter sup,
.letter sub {
  align-self: flex-start;
  font-size: 7px;
  line-height: 8px;
}

.letter sub {
  align-self: flex-end;
}

.kern {
  margin: 0 10px;
}

.group {
  display: flex;
  align-items: center;
  flex: none;
  height: 15px;
  padding-left: 4px;
  border-left: 1px solid #2b2b2b;
}

.g-size {
  width: 52px;
  border-color: transparent;
}

.g-caps {
  width: 37px;
}

.g-letters {
  width: 143px;
}

.g-color {
  width: 74px;
}

.g-align {
  width: 46px;
}

.g-leading {
  width: 86px;
}

.g-lists {
  width: 57px;
}

.g-lig {
  width: 31px;
}

.g-style {
  width: 132px;
}

.swatch {
  flex-direction: column;
  width: 33px;
  font-size: 10px;
  line-height: 10px;
}

.bar {
  width: 18px;
  height: 3px;
  margin-top: 1px;
  background: #000;
}

.bar.none {
  background: linear-gradient(120deg, #fff 45%, #d22 45%, #d22 55%, #fff 55%);
}

/* Zona de trabajo */
.workspace {
  display: flex;
  flex: 1;
  min-height: 0;
}

.tools {
  display: flex;
  flex-direction: column;
  flex: none;
  width: 27px;
  padding-top: 2px;
  background: #434343;
  color: #d0d0d0;
}

.tools button {
  position: relative;
  flex: none;
  height: 24px;
  padding-right: 1px;
}

.tools .has-more::after {
  content: "";
  position: absolute;
  right: 5px;
  bottom: 5px;
  width: 3px;
  height: 3px;
  border: solid #aaa;
  border-width: 0 1px 1px 0;
}

.tools .active {
  height: 20px;
  margin: 2px 3px;
  border: 1px solid #585858;
  border-radius: 4px;
  background: #1b1b1b;
  color: #fff;
}

.tools .active::after {
  right: 1px;
  bottom: 1px;
}

.tools hr {
  width: 20px;
  margin: 4px auto;
  border: 0;
  border-top: 1px solid #2c2c2c;
}

.tools .tools-more {
  height: 12px;
  margin: 18px 0 14px;
  background: #505050;
}

.wells {
  position: relative;
  height: 24px;
}

.well-fill,
.well-stroke {
  position: absolute;
  left: 5px;
  top: 8px;
  width: 16px;
  height: 16px;
  border-radius: 50%;
  background: #000;
}

.well-stroke {
  top: 1px;
  border: 3px solid #fff;
  background: #333;
}

.tools .swap {
  height: 12px;
  color: #888;
}

.document {
  display: flex;
  flex-direction: column;
  flex: 1;
  min-width: 0;
  border-left: 1px solid var(--line);
}

.doc-tab {
  display: flex;
  align-items: center;
  justify-content: space-between;
  flex: none;
  height: 19px;
  padding: 0 4px 0 6px;
  border-bottom: 1px solid #1c1c1c;
  background: #353535;
}

.canvas {
  position: relative;
  display: flex;
  flex: 1;
}

.artboard {
  position: relative;
  flex: 1;
  margin: 53px 96px 10px 272px;
  background: #fff;
  color: #000;
}

.art-text {
  position: absolute;
  left: 123px;
  top: 25px;
  height: 40px;
  margin: 0;
  outline: 1px solid #6fa4cf;
  outline-offset: -1px;
  font: 400 48px/40px "DejaVu Sans", sans-serif;
  white-space: nowrap;
}

.caret {
  position: absolute;
  left: 550px;
  top: 16px;
  width: 1px;
  height: 49px;
  background: #000;
}

.cursor {
  position: absolute;
  left: 582px;
  top: 100px;
  width: 22px;
  height: 22px;
  fill: none;
  stroke: #333;
}

.cursor text {
  fill: #fff;
  stroke-width: 0.5px;
  font: 14px "Liberation Serif", serif;
}

.flyout {
  position: absolute;
  left: 14px;
  top: 268px;
  width: 26px;
  padding: 3px 2px;
  background: #3a3a3a;
}

.flyout::before {
  content: "";
  position: absolute;
  left: 7px;
  top: -8px;
  width: 12px;
  height: 3px;
  border-radius: 2px;
  background: #3c3c3c;
}

.flyout button {
  width: 22px;
  height: 21px;
}

.flyout .active {
  border: 1px solid #555;
  border-radius: 4px;
  background: #1b1b1b;
}

.scroll-v,
.scroll-h {
  position: absolute;
  border-radius: 1px;
  background: #7c7c7c;
}

.scroll-v {
  right: 3px;
  top: 23%;
  width: 2px;
  height: 22%;
}

.scroll-h {
  left: 315px;
  bottom: 3px;
  width: 329px;
  height: 3px;
}

/* Paneles */
.panels {
  display: flex;
  flex-direction: column;
  flex: none;
  width: 177px;
  border-left: 1px solid #111;
  background: var(--panel);
}

.tabs {
  display: flex;
  align-items: center;
  flex: none;
  height: 20px;
  padding: 0 3px 0 5px;
  background: var(--field);
}

.tabs::before {
  content: "";
  width: 2px;
  height: 12px;
  margin-right: 5px;
  background: #383838;
}

.tab {
  height: 14px;
  padding: 0 3px;
  border-radius: 3px;
  color: #bdbdbd;
}

.tab.active {
  background: #373737;
  color: #fff;
}

.panel-menu {
  width: 11px;
  height: 11px;
  margin-left: auto;
  border: 1px solid #888;
  border-radius: 3px;
}

.panel-menu svg {
  width: 10px;
  height: 10px;
}

.color-panel {
  flex: none;
  height: 157px;
  border-bottom: 1px solid var(--line);
}

.picker {
  display: grid;
  height: 129px;
}

.picker > * {
  grid-area: 1 / 1;
}

.wheel-tri {
  justify-self: center;
  width: 100px;
  height: 100px;
  margin-top: 23px;
  border-radius: 50%;
  background:
    radial-gradient(circle, var(--panel) 40px, transparent 41px),
    conic-gradient(from 90deg, #f00, #ff0, #0f0, #0ff, #00f, #f0f, #f00);
}

.picker-top {
  display: flex;
  align-self: start;
  padding: 11px 5px 0 10px;
}

.color-wells {
  width: 28px;
  height: 28px;
}

.pick {
  margin-left: 3px;
  color: #aaa;
  align-self: flex-start;
}

.dot {
  width: 9px;
  height: 9px;
  border-radius: 50%;
}

.dot.red {
  margin: 1px auto 0 2px;
  background: #e00;
}

.dot.black {
  background: #000;
}

.bw {
  display: flex;
  width: 20px;
  height: 10px;
  margin-top: 7px;
  border: 1px solid #111;
}

.bw i {
  flex: 1;
  background: #000;
}

.bw i + i {
  background: #fff;
}

.picker-bottom {
  display: flex;
  align-items: flex-end;
  align-self: end;
  justify-content: space-between;
  padding: 0 7px 0 5px;
}

.hsl {
  color: var(--muted);
  font-size: 7px;
  line-height: 9px;
  text-align: right;
}

.hex {
  margin-bottom: 3px;
  color: var(--muted);
}

.hex input {
  width: 32px;
  height: 12px;
  background: #252525;
  color: var(--text);
}

.opacity-label {
  display: block;
  padding-left: 10px;
  color: var(--muted);
  font-size: 7px;
}

.opacity-row {
  display: flex;
  align-items: center;
  padding-left: 14px;
}

.opacity-row input[type="range"] {
  width: 93px;
  height: 6px;
  margin: 0 5px 0 6px;
  border-radius: 3px;
  background: linear-gradient(90deg, #eee, #383838);
  appearance: none;
}

.opacity-row input[type="range"]::-webkit-slider-thumb {
  width: 8px;
  height: 8px;
  border: 1px solid #fff;
  border-radius: 50%;
  background: #333;
  appearance: none;
}

.opacity-row input[type="text"] {
  width: 28px;
  height: 12px;
  padding-left: 3px;
  background: var(--field);
}

.opacity-row button {
  width: 10px;
  height: 12px;
  background: #4a4a4a;
}

.opacity-row button svg {
  width: 9px;
  height: 9px;
}

.layer-options {
  display: flex;
  align-items: center;
  flex: none;
  height: 22px;
  padding: 0 6px 0 8px;
}

.layer-options label {
  width: 34px;
  color: var(--muted);
  font-size: 7px;
}

.layer-options .select.dark {
  width: 37px;
}

.blend {
  width: 60px;
  margin: 0 3px 0 4px;
}

.layer-options button {
  width: 14px;
}

.layer-options svg {
  width: 9px;
  height: 9px;
}

.layers {
  flex: 1;
  border-top: 1px solid var(--line);
  background: #202020;
}

.layer {
  display: flex;
  height: 22px;
  border-bottom: 1px solid #111;
  background: #107cfb;
  line-height: 22px;
}

.kind {
  width: 11px;
  color: #6db2ff;
  text-align: center;
}

.thumb {
  width: 22px;
  border: solid #181818;
  border-width: 0 1px;
  background: linear-gradient(#272727 10px, #151515 10px, #151515 11px, #272727 11px);
}

.name {
  flex: 1;
  padding-left: 3px;
  color: #7dbaff;
}

.layer button {
  width: 24px;
  border-left: 1px solid #0a4e9f;
}

.layer svg {
  width: 10px;
  height: 10px;
}

.layer-actions {
  display: flex;
  align-items: center;
  justify-content: space-between;
  flex: none;
  height: 22px;
  padding: 0 5px 0 4px;
  background: #3b3b3b;
}

.layer-actions > div {
  display: flex;
}

.layer-actions button {
  width: 13px;
}

.layer-actions svg {
  width: 11px;
  height: 11px;
}

.transform {
  position: relative;
  display: flex;
  align-items: flex-start;
  flex: none;
  height: 89px;
  padding: 9px 14px 0 10px;
}

.anchors {
  width: 26px;
  height: 26px;
  margin-top: 13px;
}

.fields {
  display: grid;
  grid-template-columns: 16px 44px 17px 44px;
  gap: 3px 2px;
  flex: 1;
}

.fields label {
  color: var(--muted);
  line-height: 13px;
  text-align: right;
}

.fields input,
.fields .select {
  width: 44px;
  height: 13px;
  padding-left: 4px;
  background: var(--field);
}

.fields .select select {
  padding: 0;
}

.fields .last {
  margin-top: 4px;
}

.link {
  position: absolute;
  right: 1px;
  top: 16px;
  width: 4px;
  height: 13px;
  border: 1px solid #777;
  border-right: 0;
}

.transform-foot {
  position: absolute;
  right: 13px;
  bottom: 11px;
  display: flex;
  gap: 6px;
}

.transform-foot > svg {
  width: 11px;
  height: 11px;
  color: #686868;
}

/* Barra de estado */
.status {
  display: flex;
  align-items: center;
  flex: none;
  height: 17px;
  padding-left: 2px;
  background: #434343;
}

.status button {
  width: 13px;
}

.status svg {
  width: 10px;
  height: 10px;
}

.status button:disabled {
  color: #8a8a8a;
}

.page {
  width: 50px;
  text-align: center;
}

.status p {
  margin-left: 12px;
  color: #b5b5b5;
}

.status b {
  color: #fff;
}

/* Barra de tareas */
.taskbar {
  display: grid;
  grid-template-columns: 1fr auto 1fr;
  align-items: center;
  flex: none;
  height: 31px;
  background: linear-gradient(90deg, #1f2e1b, #272b15 50%, #1e3019);
}

.apps {
  display: flex;
  grid-column: 2;
  gap: 3px;
}

.apps button {
  position: relative;
  width: 26px;
  height: 28px;
  padding-bottom: 2px;
  border-radius: 3px;
}

.apps svg,
.apps .brand {
  width: 16px;
  height: 16px;
}

.apps .brand {
  font-size: 18px;
  line-height: 15px;
}

.apps .open::after {
  content: "";
  position: absolute;
  bottom: 1px;
  width: 4px;
  height: 2px;
  border-radius: 1px;
  background: #a5aaa0;
}

.apps .current {
  background: #343a29;
}

.apps .open.current::after {
  width: 10px;
  background: #dde;
}

.badge {
  position: absolute;
  right: 3px;
  top: 1px;
  width: 9px;
  height: 9px;
  border-radius: 50%;
  background: #e0434f;
  font-size: 6px;
  line-height: 9px;
}

.badge.rec {
  width: 8px;
  height: 8px;
  background: #f00;
}

.tray {
  display: flex;
  align-items: center;
  justify-content: flex-end;
  padding-right: 13px;
  line-height: 10px;
  text-align: center;
}

.tray button {
  width: 21px;
}

.tray .lang {
  width: 32px;
}

.tray .net {
  width: 32px;
  gap: 4px;
}

.clock {
  width: 50px;
  text-align: right;
}
```
